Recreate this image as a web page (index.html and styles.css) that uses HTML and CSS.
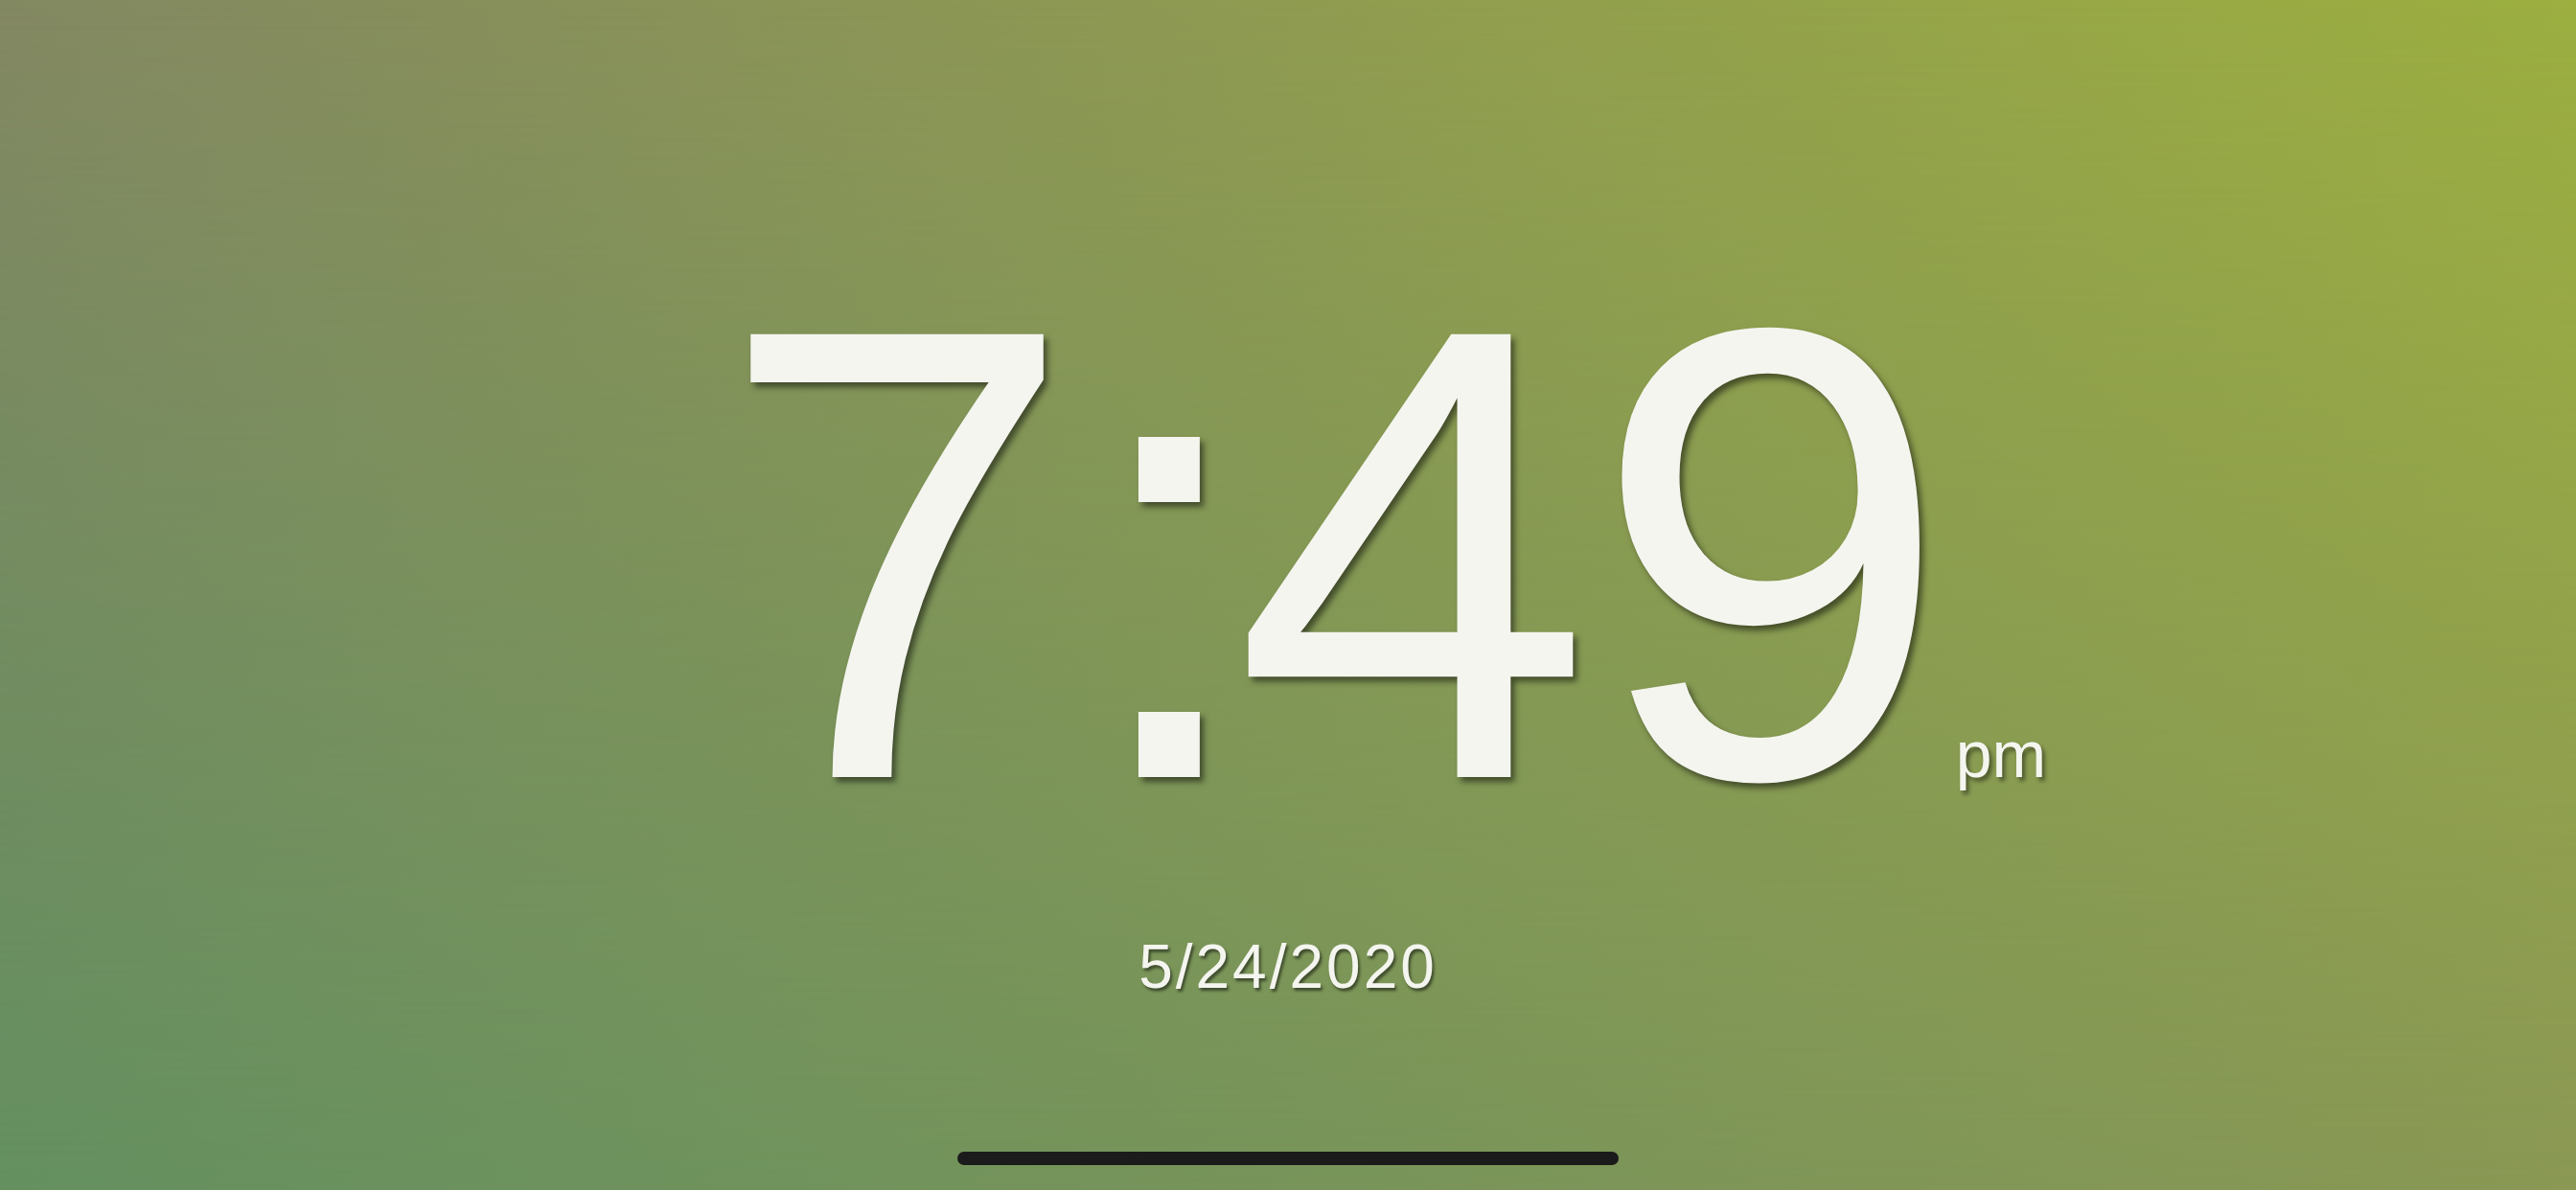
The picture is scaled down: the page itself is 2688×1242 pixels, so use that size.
FILE: index.html
```html
<!DOCTYPE html>
<html lang="en">
<head>
<meta charset="utf-8">
<title>Clock</title>
<link rel="stylesheet" href="styles.css">
</head>
<body>
<main class="screen">
  <div class="time-row">
    <span class="time">
      <span class="hours">7</span><span class="colon">:</span><span class="minutes">49</span>
    </span>
    <span class="meridiem">pm</span>
  </div>
  <div class="date">5/24/2020</div>
  <div class="home-indicator"></div>
</main>
</body>
</html>
```
FILE: styles.css
```css
html, body {
  margin: 0;
  padding: 0;
}

body {
  width: 2688px;
  height: 1242px;
  overflow: hidden;
  background: linear-gradient(to right, #838862, #9caf40);
  font-family: "Liberation Sans", Arial, Helvetica, sans-serif;
  color: #f4f5ef;
}

body::before {
  content: "";
  position: fixed;
  inset: 0;
  background: linear-gradient(to right, #649060, #8a9854);
  -webkit-mask-image: linear-gradient(to bottom, transparent, #000);
  mask-image: linear-gradient(to bottom, transparent, #000);
  z-index: -1;
}

.screen {
  height: 1242px;
  display: flex;
  flex-direction: column;
  align-items: center;
}

.time-row {
  margin-top: 242px;
  padding-left: 196px;
  display: flex;
  align-items: baseline;
  line-height: 1;
}

.time {
  font-size: 672px;
  line-height: 1;
  text-shadow: 4px 5px 6px rgba(0, 0, 0, 0.5);
}

.colon {
  margin-left: 4px;
  letter-spacing: -26px;
}

.meridiem {
  font-size: 68px;
  line-height: 1;
  margin-left: 6px;
  text-shadow: 3px 4px 4px rgba(0, 0, 0, 0.45);
}

.date {
  margin-top: 63px;
  font-size: 64px;
  letter-spacing: 3px;
  line-height: 1;
  text-shadow: 2px 3px 3px rgba(0, 0, 0, 0.5);
}

.home-indicator {
  margin-top: 161px;
  width: 690px;
  height: 14px;
  border-radius: 7px;
  background: #1b1b1b;
}
```
